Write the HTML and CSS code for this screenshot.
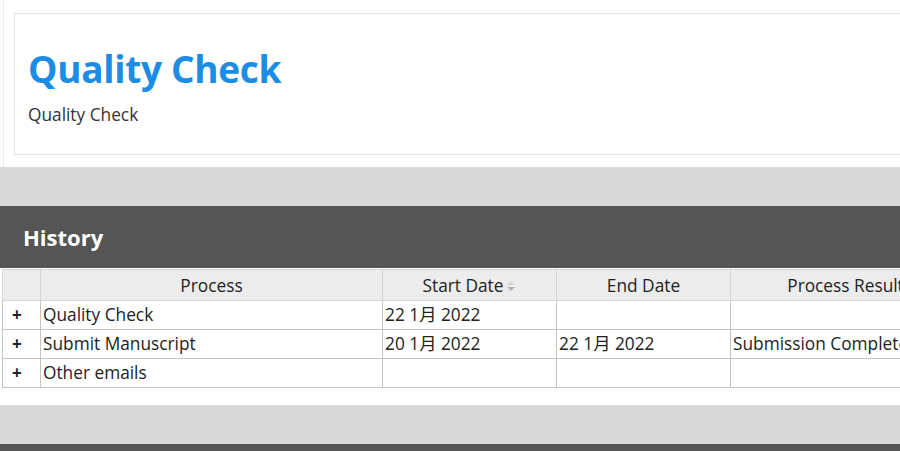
FILE: index.html
```html
<!DOCTYPE html>
<html>
<head>
<meta charset="utf-8">
<link rel="stylesheet" href="styles.css">
</head>
<body>
<div class="page">
  <section class="top">
    <div class="card">
      <h1 class="title">Quality Check</h1>
      <p class="subtitle">Quality Check</p>
    </div>
  </section>
  <div class="gap"></div>
  <section class="panel">
    <div class="panel-head">History</div>
    <div class="panel-body">
      <table class="grid">
        <colgroup>
          <col class="c0"><col class="c1"><col class="c2"><col class="c3"><col class="c4">
        </colgroup>
        <thead>
          <tr>
            <th></th>
            <th>Process</th>
            <th><span class="sortable">Start Date<svg class="sort" width="10" height="14" viewBox="0 0 10 14"><path d="M5 2 L9 6 H1 Z" fill="#d6d6d6"/><path d="M5 12 L9 8 H1 Z" fill="#b5b5b5"/></svg></span></th>
            <th>End Date</th>
            <th>Process Result</th>
          </tr>
        </thead>
        <tbody>
          <tr><td class="exp">+</td><td>Quality Check</td><td>22 1月 2022</td><td></td><td></td></tr>
          <tr><td class="exp">+</td><td>Submit Manuscript</td><td>20 1月 2022</td><td>22 1月 2022</td><td>Submission Complete</td></tr>
          <tr><td class="exp">+</td><td>Other emails</td><td></td><td></td><td></td></tr>
        </tbody>
      </table>
    </div>
  </section>
  <div class="gap"></div>
  <div class="panel-head next"></div>
</div>
</body>
</html>
```

FILE: styles.css
```css
html, body {
  margin: 0;
  padding: 0;
  background: #ffffff;
  overflow: hidden;
}
body {
  font-family: "Open Sans", "Noto Sans CJK SC", sans-serif;
  color: #222;
}
.page {
  width: 1100px;
}
.top {
  margin-left: 3px;
  border-left: 1px solid #ececec;
  padding: 13px 0 12px 10px;
  background: #fff;
}
.card {
  border: 1px solid #e2e2e2;
  height: 140px;
  box-sizing: content-box;
  padding: 0 0 0 13px;
  background: #fff;
}
.title {
  margin: 0;
  padding-top: 32px;
  font-size: 37px;
  line-height: 46px;
  font-weight: 700;
  color: #1b8de6;
  letter-spacing: -0.3px;
}
.subtitle {
  margin: 12px 0 0;
  font-size: 17.3px;
  line-height: 22px;
  color: #333;
}
.gap {
  height: 39px;
  background: #d9d9d9;
}
.panel-head {
  height: 62px;
  background: #555555;
  color: #fff;
  font-size: 22px;
  font-weight: 700;
  line-height: 62px;
  padding-left: 23px;
  box-sizing: border-box;
}
.panel-head.next {
  height: 10px;
}
.panel-body {
  height: 137px;
  background: #fff;
  padding: 1px 0 0 2px;
  box-sizing: border-box;
}
.grid {
  border-collapse: collapse;
  table-layout: fixed;
  width: 958px;
  font-size: 17.3px;
}
.c0 { width: 38px; }
.c1 { width: 342px; }
.c2 { width: 174px; }
.c3 { width: 174px; }
.c4 { width: 230px; }
.grid th, .grid td {
  border: 1px solid #c4c4c4;
  height: 28px;
  padding: 0 2px;
  white-space: nowrap;
  overflow: hidden;
  line-height: 28px;
}
.grid th {
  background: #ececec;
  font-weight: 400;
  text-align: center;
  color: #222;
  height: 29px;
  border-color: #d4d4d4;
  padding-top: 1px;
}
.grid td {
  text-align: left;
  color: #222;
}
.grid td.exp {
  text-align: left;
  padding-left: 9px;
  font-weight: 700;
  font-size: 17px;
}
.sortable {
  display: inline-flex;
  align-items: center;
  gap: 3px;
}
.sort {
  display: block;
}
```
